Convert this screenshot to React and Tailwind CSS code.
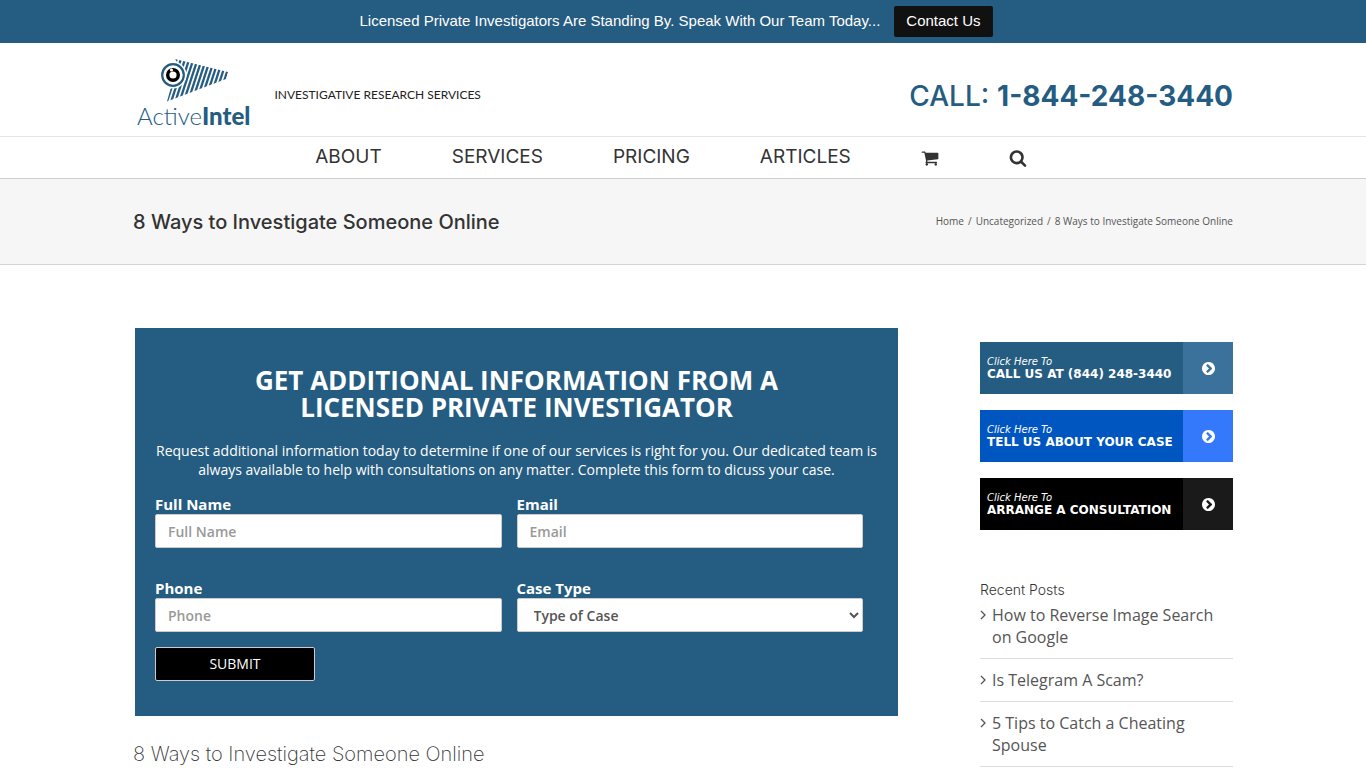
import React, { useState } from 'react';

const heading = "font-['Inter',sans-serif]";

const navLinks = ['About', 'Services', 'Pricing', 'Articles'];

const ctas = [
    { text: 'CALL US AT (844) 248-3440', left: 'bg-[#255c81]', right: 'bg-[#3b729b]' },
    { text: 'TELL US ABOUT YOUR CASE', left: 'bg-[#0056c0]', right: 'bg-[#3479fb]' },
    { text: 'ARRANGE A CONSULTATION', left: 'bg-black', right: 'bg-[#1a1a1a]' },
];

const posts = [
    'How to Reverse Image Search on Google',
    'Is Telegram A Scam?',
    '5 Tips to Catch a Cheating Spouse',
];

function CartIcon() {
    return (
        <svg viewBox="0 0 1792 1792" className="size-[18px]" fill="currentColor" aria-hidden="true">
            <path d="M704 1536q0 52-38 90t-90 38-90-38-38-90 38-90 90-38 90 38 38 90zm896 0q0 52-38 90t-90 38-90-38-38-90 38-90 90-38 90 38 38 90zm128-1088v512q0 24-16.500 42.500t-40.500 21.500l-1044 122q13 60 13 70 0 16-24 64h920q26 0 45 19t19 45-19 45-45 19h-1024q-26 0-45-19t-19-45q0-11 8-31.500t16-36 21.500-40 15.500-29.500l-177-823h-204q-26 0-45-19t-19-45 19-45 45-19h256q16 0 28.500 6.500t19.500 15.500 13 24.500 8 26 5.500 29.500 4.500 26h1201q26 0 45 19t19 45z" />
        </svg>
    );
}

function SearchIcon() {
    return (
        <svg viewBox="0 0 1792 1792" className="size-[18px]" fill="currentColor" aria-hidden="true">
            <path d="M1216 832q0-185-131.500-316.500t-316.500-131.500-316.500 131.500-131.500 316.500 131.500 316.500 316.500 131.500 316.500-131.500 131.500-316.500zm512 832q0 52-38 90t-90 38q-54 0-90-38l-343-342q-179 124-399 124-143 0-273.500-55.500t-225-150-150-225-55.500-273.500 55.500-273.500 150-225 225-150 273.500-55.500 273.500 55.500 225 150 150 225 55.500 273.500q0 220-124 399l343 343q37 37 37 90z" />
        </svg>
    );
}

function ChevronCircle() {
    return (
        <svg viewBox="128 128 1536 1536" className="size-[13px]" fill="currentColor" aria-hidden="true">
            <path d="M845 1395l454-454q19-19 19-45t-19-45l-454-454q-19-19-45-19t-45 19l-102 102q-19 19-19 45t19 45l307 307-307 307q-19 19-19 45t19 45l102 102q19 19 45 19t45-19zm819-499q0 209-103 385.500t-279.500 279.500-385.500 103-385.500-103-279.500-279.500-103-385.500 103-385.500 279.500-279.500 385.500-103 385.500 103 279.500 279.500 103 385.500z" />
        </svg>
    );
}

function LogoMark() {
    return (
        <svg viewBox="0 0 68 46" className="ml-6 h-[46px] w-[68px]" aria-hidden="true">
            <defs>
                <clipPath id="beam">
                    <path d="M14 1 L67 14 L65 21 L6 43.500 L9.500 31 L25 17 Z" />
                </clipPath>
            </defs>
            <g clipPath="url(#beam)" stroke="#255c81" strokeWidth="2.300">
                {[0, 1, 2, 3, 4, 5, 6, 7, 8, 9, 10, 11, 12, 13, 14, 15].map((i) => (
                    <line key={i} x1={16 + i * 4.2} y1="0" x2={1 + i * 4.2} y2="46" />
                ))}
            </g>
            <circle cx="12" cy="17" r="13.500" fill="#fff" />
            <circle cx="12" cy="17" r="10.800" fill="#fff" stroke="#255c81" strokeWidth="2.200" />
            <circle cx="12" cy="17" r="5.300" fill="none" stroke="#000" strokeWidth="3.400" />
            <circle cx="10.500" cy="12" r="1.600" fill="#fff" />
        </svg>
    );
}

function TopBar() {
    return (
        <div className="flex h-[43px] items-center justify-center gap-3.5 bg-[#255c81] pr-3.5 font-['Liberation_Sans',sans-serif] text-[15px] text-white">
            <span>Licensed Private Investigators Are Standing By. Speak With Our Team Today...</span>
            <button type="button" className="h-[31px] rounded-xs bg-[#111] px-3">
                Contact Us
            </button>
        </div>
    );
}

function Header() {
    return (
        <header>
            <div className="mx-auto flex h-[93px] max-w-[1100px] items-center justify-between pt-1.5">
                <a href="#" className="flex items-center font-['Lato',sans-serif]">
                    <span className="block pl-1">
                        <LogoMark />
                        <span className="block text-2xl leading-6 text-[#255c81]">
                            <span className="font-light">Active</span>
                            <span className="font-black">Intel</span>
                        </span>
                    </span>
                    <span className="ml-6 pt-1 text-xs text-[#222]">INVESTIGATIVE RESEARCH SERVICES</span>
                </a>
                <div className={`${heading} pt-1.5 text-[28px] leading-8 text-[#255c81]`}>
                    <span className="font-medium">CALL:</span> <span className="font-bold">1-844-248-3440</span>
                </div>
            </div>
            <nav className={`${heading} flex h-[43px] items-center justify-center gap-[70px] border-t border-b border-t-[#e5e5e5] border-b-[#ccc] pr-6 text-[19px] text-[#333]`}>
                {navLinks.map((link) => (
                    <a key={link} href="#" className="uppercase">{link}</a>
                ))}
                <a href="#" aria-label="Cart"><CartIcon /></a>
                <a href="#" aria-label="Search"><SearchIcon /></a>
            </nav>
        </header>
    );
}

function TitleBar() {
    return (
        <div className="border-b border-[#d2d3d4] bg-[#f6f6f6]">
            <div className="mx-auto flex h-[85px] max-w-[1100px] items-center justify-between">
                <h1 className={`${heading} text-xl font-medium text-[#333]`}>8 Ways to Investigate Someone Online</h1>
                <div className="flex gap-1 text-[10px] text-[#555]">
                    <a href="#">Home</a>
                    <span>/</span>
                    <a href="#">Uncategorized</a>
                    <span>/</span>
                    <span>8 Ways to Investigate Someone Online</span>
                </div>
            </div>
        </div>
    );
}

const fieldClass = 'block h-[34px] w-full rounded-xs border border-[#ccc] bg-white px-3 text-sm font-semibold text-[#555] placeholder:text-[#999] focus:outline-none';

function Field({ id, label, children }) {
    return (
        <div>
            <label htmlFor={id} className="block text-[15px] leading-5 font-bold text-white">{label}</label>
            {children}
        </div>
    );
}

function ContactForm() {
    const [form, setForm] = useState({ name: '', email: '', phone: '', type: '' });
    const update = (key) => (e) => setForm({ ...form, [key]: e.target.value });

    return (
        <form onSubmit={(e) => e.preventDefault()} className="ml-0.5 bg-[#255c81] px-5 pt-[39px] pb-[35px] text-white">
            <div className="text-center">
                <h2 className="text-[26px] leading-[27px] font-bold">
                    GET ADDITIONAL INFORMATION FROM A<br />LICENSED PRIVATE INVESTIGATOR
                </h2>
                <p className="mt-5 text-sm leading-[19px]">
                    Request additional information today to determine if one of our services is right for you. Our dedicated team is<br />
                    always available to help with consultations on any matter. Complete this form to dicuss your case.
                </p>
            </div>
            <div className="mt-[15px] grid grid-cols-2 gap-x-[15px] gap-y-[30px] pr-[15px]">
                <Field id="name" label="Full Name">
                    <input id="name" type="text" placeholder="Full Name" value={form.name} onChange={update('name')} className={fieldClass} />
                </Field>
                <Field id="email" label="Email">
                    <input id="email" type="email" placeholder="Email" value={form.email} onChange={update('email')} className={fieldClass} />
                </Field>
                <Field id="phone" label="Phone">
                    <input id="phone" type="tel" placeholder="Phone" value={form.phone} onChange={update('phone')} className={fieldClass} />
                </Field>
                <Field id="type" label="Case Type">
                    <select id="type" value={form.type} onChange={update('type')} className={`${fieldClass} pr-0`}>
                        <option value="">Type of Case</option>
                    </select>
                </Field>
            </div>
            <button type="submit" className="mt-[15px] block h-[34px] w-40 rounded-xs border border-[#ccc] bg-black text-sm">
                SUBMIT
            </button>
        </form>
    );
}

function Sidebar() {
    return (
        <aside className="pt-[14px]">
            <div className="flex flex-col gap-4 font-['DejaVu_Sans',sans-serif] text-white">
                {ctas.map((cta) => (
                    <a key={cta.text} href="#" className="flex h-[52px]">
                        <span className={`${cta.left} flex flex-1 flex-col justify-center pl-[7px]`}>
                            <span className="text-[10px] leading-3 italic">Click Here To</span>
                            <span className="text-xs leading-3 font-bold whitespace-nowrap">{cta.text}</span>
                        </span>
                        <span className={`${cta.right} flex w-[50px] items-center justify-center`}>
                            <ChevronCircle />
                        </span>
                    </a>
                ))}
            </div>
            <h4 className={`${heading} mt-[50px] text-sm leading-5 font-light text-[#333]`}>Recent Posts</h4>
            <ul className="mt-1 text-base leading-[22px] text-[#555]">
                {posts.map((post) => (
                    <li key={post} className="mb-2.5 flex gap-1.5 border-b border-[#ddd] pb-2.5 last:mb-0">
                        <svg viewBox="0 0 6 10" className="mt-1.5 h-2.5 w-1.5 shrink-0" fill="none" stroke="currentColor" strokeWidth="1.300" aria-hidden="true">
                            <path d="M1 1 L5 5 L1 9" />
                        </svg>
                        <a href="#">{post}</a>
                    </li>
                ))}
            </ul>
        </aside>
    );
}

export default function App() {
    return (
        <div className="bg-white font-['Open_Sans',sans-serif]">
            <TopBar />
            <Header />
            <TitleBar />
            <div className="mx-auto grid max-w-[1100px] grid-cols-[1fr_253px] gap-x-[82px] pt-[63px]">
                <main>
                    <ContactForm />
                    <h2 className={`${heading} mt-6 text-xl leading-7 font-extralight text-[#333]`}>8 Ways to Investigate Someone Online</h2>
                </main>
                <Sidebar />
            </div>
        </div>
    );
}
